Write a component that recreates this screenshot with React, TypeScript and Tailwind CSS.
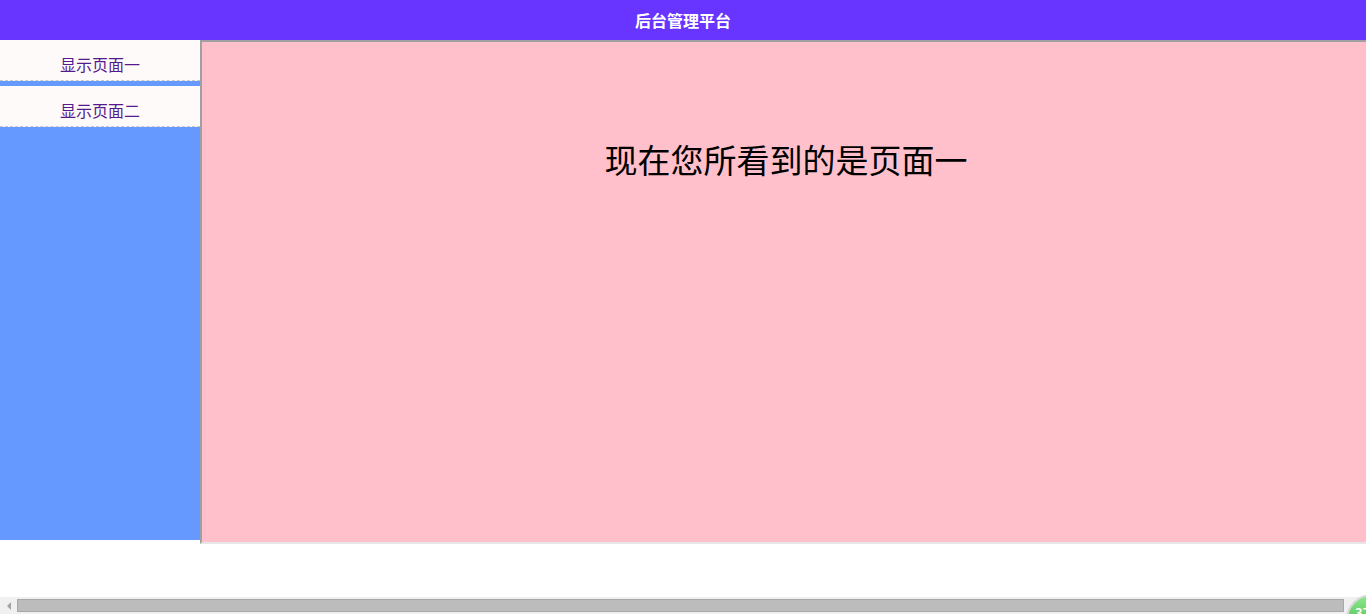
import React from "react";

const cjk = { fontFamily: '"Noto Sans CJK SC", "Noto Sans", sans-serif' };

const NavItem = ({ label }: { label: string }) => (
  <div className="h-[41px] border-b border-dashed border-[#c8c8c8] bg-[#fffafa] pt-[12px] text-center text-base leading-6 text-[#551a8b]">
    {label}
  </div>
);

export default function App() {
  return (
    <div className="relative flex h-[614px] w-[1366px] flex-col overflow-hidden bg-white" style={cjk}>
      {/* top bar */}
      <header className="flex h-10 shrink-0 items-center justify-center bg-[#6735ff] text-base font-semibold text-white">
        后台管理平台
      </header>

      {/* body */}
      <div className="flex shrink-0">
        <aside className="flex h-[500px] w-[200px] shrink-0 flex-col gap-[5px] bg-[#6699ff]">
          <NavItem label="显示页面一" />
          <NavItem label="显示页面二" />
        </aside>
        <main className="h-[504px] w-[1172px] shrink-0 border-2 border-t-[#a0a0a0] border-l-[#a0a0a0] border-b-[#e6e6e6] border-r-[#e6e6e6] bg-[#ffc0cb]">
          <h1 className="pt-[97px] text-center text-[33px] font-normal leading-10 text-black">
            现在您所看到的是页面一
          </h1>
        </main>
      </div>

      <div className="flex-1" />

      {/* horizontal scrollbar */}
      <div className="flex h-[17px] shrink-0 items-center bg-[#f0f0f0]">
        <div className="flex w-[17px] items-center justify-center">
          <div className="h-0 w-0 border-y-[4px] border-r-[4px] border-y-transparent border-r-[#a3a3a3]" />
        </div>
        <div className="h-[13px] w-[1327px] border border-[#a8a8a8] bg-[#bcbcbc]" />
      </div>

      {/* floating badge in corner */}
      <div className="absolute left-[1346px] top-[594px] h-[52px] w-[52px] rounded-full border-2 border-[#d8d8d8] bg-gradient-to-b from-[#8be88b] to-[#2fa82f] pl-[7px] pt-[10px] text-[13px] font-bold leading-none text-white">
        37
      </div>
    </div>
  );
}
